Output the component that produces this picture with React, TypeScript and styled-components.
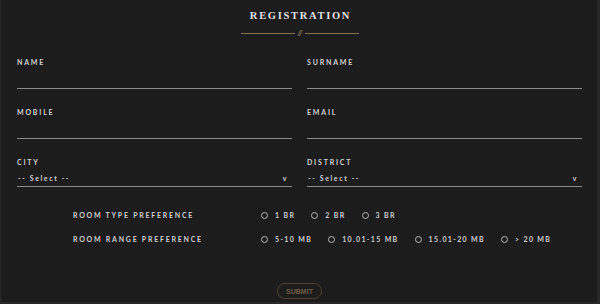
import styled, { createGlobalStyle } from 'styled-components';

const GlobalStyle = createGlobalStyle`
  html, body {
    margin: 0;
    padding: 0;
    background: #272727;
  }
`;

const Panel = styled.div`
  width: 596px;
  height: 302px;
  margin-left: 1px;
  background: #1c1c1c;
  box-sizing: border-box;
  padding: 9px 14px 0 16px;
  font-family: Lato, 'Open Sans', sans-serif;
  color: #d4d4d4;
  display: flex;
  flex-direction: column;
`;

const Header = styled.div`
  display: flex;
  flex-direction: column;
  align-items: center;
`;

const Title = styled.h1`
  margin: 0;
  font-family: 'Liberation Serif', serif;
  font-size: 10.5px;
  font-weight: 700;
  letter-spacing: 1.7px;
  color: #e2e2e2;
  line-height: 14px;
  padding-left: 1px;
`;

const Divider = styled.div`
  margin-top: 6px;
  display: flex;
  align-items: center;
  gap: 3px;
  color: #8f7f5e;
  font-size: 7px;
  font-style: italic;
  font-weight: 700;
  line-height: 8px;
`;

const Rule = styled.span`
  width: 54px;
  height: 1px;
  background: #83734f;
`;

const Grid = styled.div`
  margin-top: 20px;
  display: grid;
  grid-template-columns: 275px 275px;
  column-gap: 15px;
  row-gap: 18px;
`;

const Field = styled.div`
  display: flex;
  flex-direction: column;
`;

const Label = styled.label`
  font-size: 7px;
  font-weight: 700;
  letter-spacing: 1.8px;
  line-height: 10px;
  color: #d2d2d2;
`;

const Input = styled.div`
  height: 21px;
  border-bottom: 1px solid #8a8a8a;
`;

const SelectBox = styled.div`
  margin-top: 7px;
  height: 11px;
  border-bottom: 1px solid #8a8a8a;
  display: flex;
  justify-content: space-between;
  align-items: flex-start;
  padding: 0 4px 1px 1px;
  font-size: 7px;
  font-weight: 700;
  letter-spacing: 1.6px;
  line-height: 9px;
  color: #d0d0d0;
`;

const Prefs = styled.div`
  margin-top: 23px;
  padding-left: 56px;
  display: flex;
  flex-direction: column;
  gap: 14px;
`;

const PrefRow = styled.div`
  display: flex;
  align-items: center;
  height: 10px;
`;

const PrefLabel = styled.span`
  width: 188px;
  font-size: 7px;
  font-weight: 700;
  letter-spacing: 1.75px;
  color: #cfcfcf;
`;

const Options = styled.div`
  display: flex;
  align-items: center;
  gap: 16px;
`;

const Option = styled.span`
  display: flex;
  align-items: center;
  gap: 7px;
  font-size: 7px;
  font-weight: 700;
  letter-spacing: 1.35px;
  color: #cfcfcf;
`;

const Radio = styled.span`
  width: 5px;
  height: 5px;
  border: 1.3px solid #b8b8b8;
  border-radius: 50%;
`;

const Footer = styled.div`
  margin-top: auto;
  margin-bottom: 3px;
  display: flex;
  justify-content: center;
  padding-right: 1px;
`;

const Submit = styled.button`
  width: 45px;
  height: 16px;
  border: 1px solid #4e4132;
  border-radius: 8px;
  background: transparent;
  color: #6e5c45;
  font-family: 'Liberation Sans', Arial, sans-serif;
  font-size: 7px;
  font-weight: 700;
  padding: 0;
  letter-spacing: 0;
`;

const textFields = ['NAME', 'SURNAME', 'MOBILE', 'EMAIL'];
const selectFields = ['CITY', 'DISTRICT'];

const roomTypes = ['1 BR', '2 BR', '3 BR'];
const roomRanges = ['5-10 MB', '10.01-15 MB', '15.01-20 MB', '> 20 MB'];

export default function App() {
  return (
    <>
      <GlobalStyle />
      <Panel>
        <Header>
          <Title>REGISTRATION</Title>
          <Divider>
            <Rule />
            //
            <Rule />
          </Divider>
        </Header>

        <Grid>
          {textFields.map((name) => (
            <Field key={name}>
              <Label>{name}</Label>
              <Input />
            </Field>
          ))}
          {selectFields.map((name) => (
            <Field key={name}>
              <Label>{name}</Label>
              <SelectBox>
                <span>-- Select --</span>
                <span>v</span>
              </SelectBox>
            </Field>
          ))}
        </Grid>

        <Prefs>
          <PrefRow>
            <PrefLabel>ROOM TYPE PREFERENCE</PrefLabel>
            <Options>
              {roomTypes.map((t) => (
                <Option key={t}>
                  <Radio />
                  {t}
                </Option>
              ))}
            </Options>
          </PrefRow>
          <PrefRow>
            <PrefLabel>ROOM RANGE PREFERENCE</PrefLabel>
            <Options>
              {roomRanges.map((t) => (
                <Option key={t}>
                  <Radio />
                  {t}
                </Option>
              ))}
            </Options>
          </PrefRow>
        </Prefs>

        <Footer>
          <Submit>SUBMIT</Submit>
        </Footer>
      </Panel>
    </>
  );
}
